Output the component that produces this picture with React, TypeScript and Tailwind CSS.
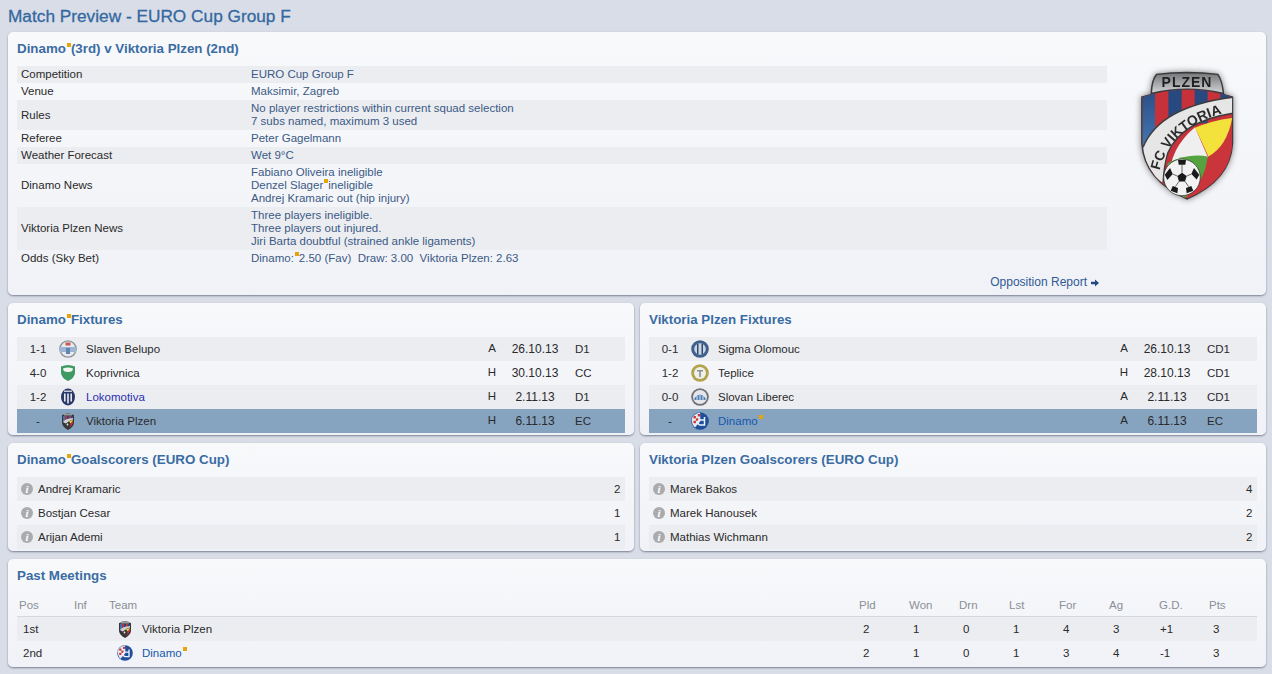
import type { ReactNode } from 'react'

const font = { fontFamily: '"Liberation Sans", Arial, sans-serif' }

const Flag = () => <span className="ml-[1px] inline-block h-[4px] w-[4px] bg-[#e5a50a] align-[6px]" />

const Panel = ({ title, children, className = '' }: { title: ReactNode; children: ReactNode; className?: string }) => (
  <section className={`rounded-[5px] bg-gradient-to-b from-[#f8f9fb] to-[#f1f2f7] px-[9px] shadow-[0_1px_2px_rgba(70,78,100,0.65)] ${className}`}>
    <h2 className="h-[34px] text-[13.33px] font-bold leading-[33px] text-[#3a6ca3]">{title}</h2>
    {children}
  </section>
)

const Ball = ({ cx, cy, r }: { cx: number; cy: number; r: number }) => (
  <g>
    <circle cx={cx} cy={cy} r={r} fill="#f2f2f2" stroke="#222" strokeWidth="2" />
    <polygon points={`${cx},${cy - 14} ${cx + 14},${cy - 4} ${cx + 9},${cy + 12} ${cx - 9},${cy + 12} ${cx - 14},${cy - 4}`} fill="#1a1a1a" />
    <polygon points={`${cx - 12},${cy - 52} ${cx + 12},${cy - 52} ${cx + 10},${cy - 38} ${cx - 10},${cy - 38}`} fill="#1a1a1a" />
    <polygon points={`${cx + 36},${cy - 28} ${cx + 52},${cy - 8} ${cx + 44},${cy + 6} ${cx + 28},${cy - 10}`} fill="#1a1a1a" />
    <polygon points={`${cx - 36},${cy - 28} ${cx - 52},${cy - 8} ${cx - 44},${cy + 8} ${cx - 28},${cy - 10}`} fill="#1a1a1a" />
    <polygon points={`${cx - 28},${cy + 26} ${cx - 12},${cy + 32} ${cx - 14},${cy + 48} ${cx - 34},${cy + 40}`} fill="#1a1a1a" />
    <polygon points={`${cx + 28},${cy + 26} ${cx + 12},${cy + 32} ${cx + 14},${cy + 48} ${cx + 34},${cy + 40}`} fill="#1a1a1a" />
    <path d={`M${cx} ${cy - 14}V${cy - 38}M${cx + 14} ${cy - 4}L${cx + 28} ${cy - 10}M${cx - 14} ${cy - 4}L${cx - 28} ${cy - 10}M${cx + 9} ${cy + 12}L${cx + 20} ${cy + 28}M${cx - 9} ${cy + 12}L${cx - 20} ${cy + 28}`} stroke="#222" strokeWidth="2" />
  </g>
)

// viewBox coords are the 3x zoom of the crest area
const PlzenCrest = ({ className }: { className: string }) => (
  <svg viewBox="108 60 300 400" className={className}>
    <defs>
      <clipPath id="shield-lg">
        <path d="M124 142 Q258 96 394 142 L394 280 Q388 392 258 446 Q132 392 124 280 Z" />
      </clipPath>
      <linearGradient id="band-lg" x1="0" y1="0" x2="0" y2="1">
        <stop offset="0" stopColor="#77797c" />
        <stop offset="1" stopColor="#d0d1d3" />
      </linearGradient>
      <linearGradient id="blue-lg" x1="0" y1="0" x2="0" y2="1">
        <stop offset="0" stopColor="#27497f" />
        <stop offset="1" stopColor="#4a80bd" />
      </linearGradient>
      <path id="arc-text" d="M176 362 Q208 224 392 184" />
    </defs>
    <path d="M148 132 Q150 88 165 71 Q258 60 352 71 Q366 90 370 132 L397 140 L397 282 Q390 394 258 450 Q128 394 120 282 L120 140 Z" fill="#3a3a3c" />
    <path d="M153 128 Q155 90 168 75 Q258 66 349 75 Q362 92 365 128 Q258 104 153 128 Z" fill="url(#band-lg)" />
    <text x="258" y="111" textAnchor="middle" fontSize="42" fontWeight="700" fill="#1f1f1f" letterSpacing="3" style={font}>
      PLZEN
    </text>
    <g clipPath="url(#shield-lg)">
      <rect x="120" y="100" width="280" height="350" fill="#c7313a" />
      <rect x="120" y="100" width="42" height="230" fill="url(#blue-lg)" />
      <rect x="202" y="100" width="40" height="140" fill="#27497f" />
      <rect x="281" y="100" width="39" height="120" fill="#27497f" />
      <rect x="358" y="100" width="40" height="80" fill="#27497f" />
      <path d="M394 190 L394 300 Q380 392 258 446 L300 330 Q300 240 394 190 Z" fill="#c9353b" />
      <path d="M205 400 Q200 300 282 232 L320 320 Q300 400 246 450 Z" fill="#efefef" />
      <path d="M282 234 Q330 212 394 204 Q378 290 322 320 Q300 270 282 234 Z" fill="#f3e13c" />
      <path d="M200 340 Q260 310 320 320 Q312 400 246 448 L190 400 Z" fill="#55a33f" />
      <path d="M126 292 Q176 170 396 142 L396 190 Q240 214 200 310 Q188 350 186 400 L160 382 Q130 340 126 292 Z" fill="#e6e6e6" />
      <path d="M126 292 Q176 170 396 142" fill="none" stroke="#3c3c3e" strokeWidth="4" />
      <path d="M396 190 Q240 214 200 310 Q188 350 186 400" fill="none" stroke="#3c3c3e" strokeWidth="4" />
    </g>
    <text fontSize="42" fontWeight="700" fill="#2a2a2a" style={font}>
      <textPath href="#arc-text" startOffset="0">
        FC VIKTORIA
      </textPath>
    </text>
    <Ball cx={243} cy={383} r={55} />
  </svg>
)

const Round = ({ children }: { children: ReactNode }) => (
  <svg viewBox="0 0 18 18" className="h-[18px] w-[18px]">
    {children}
  </svg>
)

const crests: Record<string, ReactNode> = {
  slaven: (
    <Round>
      <circle cx="9" cy="9" r="8.8" fill="#8d9197" />
      <circle cx="9" cy="9" r="7.4" fill="#e9eaee" />
      <rect x="1" y="7" width="16" height="5" fill="#9db4d2" />
      <rect x="6.500" y="2.500" width="5" height="3" fill="#c9574f" />
      <rect x="7" y="8" width="4" height="6" fill="#5f86b3" />
    </Round>
  ),
  koprivnica: (
    <Round>
      <path d="M2 2.500 Q9 -0.5 16 2.500 L16 9 Q15.500 14 9 17 Q2.500 14 2 9 Z" fill="#3d9a63" />
      <path d="M4 4.500 Q9 2.500 14 4.500 Q14 8 9 8 Q4 8 4 4.500 Z" fill="#f3f5f2" />
    </Round>
  ),
  lokomotiva: (
    <Round>
      <ellipse cx="9" cy="9" rx="7" ry="8.500" fill="#2a3769" />
      <rect x="5" y="5.500" width="1.600" height="8" fill="#e8e9f0" />
      <rect x="8.200" y="5.500" width="1.600" height="10" fill="#e8e9f0" />
      <rect x="11.400" y="5.500" width="1.600" height="8" fill="#e8e9f0" />
      <rect x="5" y="2.500" width="8" height="1.500" fill="#c7cad8" />
    </Round>
  ),
  sigma: (
    <Round>
      <circle cx="9" cy="9" r="8.800" fill="#3f5f8c" />
      <circle cx="9" cy="9" r="5.800" fill="#cfd6e2" />
      <rect x="6" y="4" width="1.500" height="10" fill="#2b4a78" />
      <rect x="10.500" y="4" width="1.500" height="10" fill="#2b4a78" />
    </Round>
  ),
  teplice: (
    <Round>
      <circle cx="9" cy="9" r="8.800" fill="#b3a24e" />
      <circle cx="9" cy="9" r="6" fill="#eef0ea" />
      <path d="M6 6h6v1.400H9.800V13H8.200V7.400H6z" fill="#8b8f92" />
    </Round>
  ),
  slovan: (
    <Round>
      <circle cx="9" cy="9" r="8.800" fill="#6e7277" />
      <circle cx="9" cy="9" r="7" fill="#e4e6ea" />
      <path d="M3.500 10 Q9 3 14.500 10 V12 H3.500 Z" fill="#4f7fb8" />
      <path d="M6 8v5M9 6.500v7M12 8v5" stroke="#e4e6ea" strokeWidth="1" />
    </Round>
  ),
  dinamo: (
    <Round>
      <circle cx="9" cy="9" r="8.800" fill="#1f4f9c" />
      <path d="M.8 7 Q2 2 9 .5 L9.500 9 L4 15.500 Q.5 12 .8 7 Z" fill="#e9e9ee" />
      <rect x="2.500" y="4" width="2.400" height="2.400" fill="#c9313a" />
      <rect x="6.800" y="2" width="2.400" height="2.400" fill="#c9313a" />
      <rect x="4.900" y="6.400" width="2.400" height="2.400" fill="#c9313a" />
      <rect x="2.500" y="8.800" width="2.400" height="2.400" fill="#c9313a" />
      <path d="M13.500 5v8h-4a2.400 2.400 0 0 1 0-5h4" fill="none" stroke="#f0f3fa" strokeWidth="1.500" />
    </Round>
  ),
  viktoria: (
    <svg viewBox="0 0 14 18" className="h-[18px] w-[14px]">
      <path d="M1 3 L3 2.500 Q7 0 11 2.500 L13 3 V11 Q12.500 15 7 18 Q1.500 15 1 11 Z" fill="#36363a" />
      <rect x="3" y="1.500" width="8" height="2" fill="#9a9b9e" />
      <path d="M2 4h2v6H2z" fill="#3e70ab" />
      <path d="M4 4h2v4H4z" fill="#b8343b" />
      <path d="M6 4h2v3H6z" fill="#27497f" />
      <path d="M8 4h2v3H8z" fill="#b8343b" />
      <path d="M10 4h2v3h-2z" fill="#27497f" />
      <path d="M2 10 Q4 6.500 12 6 V7.500 Q7 8.500 5.500 12 Z" fill="#cfd0d2" />
      <path d="M8 9 L12 8 Q11.500 10.500 9.500 11.500 Z" fill="#e8d53c" />
      <path d="M12 9 V11 Q11 14 8 16 L9 12 Z" fill="#c7313a" />
      <circle cx="7" cy="13" r="2.500" fill="#3a3a3a" />
      <circle cx="6.500" cy="12.500" r="0.900" fill="#e4e4e4" />
    </svg>
  ),
}

type Fixture = { score: string; crest: string; team: ReactNode; venue: string; date: string; comp: string; link?: boolean }

const Fixtures = ({ rows }: { rows: Fixture[] }) => (
  <div>
    {rows.map((row, i) => (
      <div
        key={row.date}
        className={`grid h-[24px] grid-cols-[42px_27px_396px_20px_66px_1fr] items-center ${
          i === 3 ? 'bg-[#86a3c0]' : i % 2 === 0 ? 'bg-[#ecedf1]' : ''
        }`}
      >
        <span className="text-center">{row.score}</span>
        <span className="flex justify-center pr-[9px]">{crests[row.crest]}</span>
        <span className={row.link ? (i === 3 ? 'text-[#1657ae]' : 'text-[#2b2fb0]') : ''}>{row.team}</span>
        <span className="mb-[2px] text-center">{row.venue}</span>
        <span className="text-center text-[12px]">{row.date}</span>
        <span className="pl-[7px]">{row.comp}</span>
      </div>
    ))}
  </div>
)

const Scorers = ({ rows }: { rows: [string, number][] }) => (
  <div>
    {rows.map(([name, goals], i) => (
      <div key={name} className={`flex h-[24px] items-center pl-[4px] pr-[4px] ${i % 2 === 0 ? 'bg-[#ecedf1]' : ''}`}>
        <span className="mr-[5px] flex h-[12px] w-[12px] items-center justify-center rounded-full bg-[#a9abae] text-[11px] font-bold italic leading-none text-white" style={{ fontFamily: '"Liberation Serif", serif' }}>
          i
        </span>
        <span className="flex-1">{name}</span>
        <span className="w-[7px]">{goals}</span>
      </div>
    ))}
  </div>
)

const infoRows: [string, ReactNode[]][] = [
  ['Competition', ['EURO Cup Group F']],
  ['Venue', ['Maksimir, Zagreb']],
  ['Rules', ['No player restrictions within current squad selection', '7 subs named, maximum 3 used']],
  ['Referee', ['Peter Gagelmann']],
  ['Weather Forecast', ['Wet 9°C']],
  ['Dinamo News', ['Fabiano Oliveira ineligible', <>Denzel Slager<Flag />ineligible</>, 'Andrej Kramaric out (hip injury)']],
  ['Viktoria Plzen News', ['Three players ineligible.', 'Three players out injured.', 'Jiri Barta doubtful (strained ankle ligaments)']],
  ['Odds (Sky Bet)', [<>Dinamo:<Flag />2.50 (Fav)&nbsp; Draw: 3.00&nbsp; Viktoria Plzen: 2.63</>]],
]

const headers = ['Pld', 'Won', 'Drn', 'Lst', 'For', 'Ag', 'G.D.', 'Pts']

const tableRows = [
  { pos: '1st', crest: 'viktoria', team: <>Viktoria Plzen</>, link: false, stats: ['2', '1', '0', '1', '4', '3', '+1', '3'] },
  { pos: '2nd', crest: 'dinamo', team: <>Dinamo<Flag /></>, link: true, stats: ['2', '1', '0', '1', '3', '4', '-1', '3'] },
]

export default function App() {
  return (
    <div style={font} className="h-[674px] overflow-hidden bg-[#d9dde8] pl-[8px] pr-[6px] text-[11.5px] leading-[13px] text-[#2a2a2a]">
      <h1 className="h-[32px] text-[17.25px] font-normal leading-[32px] text-[#34689f] [-webkit-text-stroke:0.3px_#34689f]">Match Preview - EURO Cup Group F</h1>

      <Panel title={<>Dinamo<Flag />(3rd) v Viktoria Plzen (2nd)</>} className="h-[263px]">
        <div className="flex">
          <div className="w-[1090px]">
            {infoRows.map(([label, lines], i) => (
              <div key={label} className={`grid grid-cols-[234px_1fr] items-center py-[2px] ${i % 2 === 0 ? 'bg-[#ecedf1]' : ''}`}>
                <span className="pl-[4px]">{label}</span>
                <div className="text-[#3b5a85]">
                  {lines.map((line, j) => (
                    <p key={j}>{line}</p>
                  ))}
                </div>
              </div>
            ))}
            <p className="mt-[9px] flex items-center justify-end pr-[8px] text-[12px] text-[#2f5a94]">
              Opposition Report
              <svg viewBox="0 0 9 8" className="ml-[4px] h-[8px] w-[8px]">
                <path d="M0 2.500h4.500V0L9 4 4.500 8V5.500H0z" fill="#24487c" />
              </svg>
            </p>
          </div>
          <div className="flex flex-1 justify-center pl-[9px] pt-[4px]">
            <PlzenCrest className="h-[133px] w-[100px] drop-shadow-[0_0_3px_rgba(0,0,0,0.5)]" />
          </div>
        </div>
      </Panel>

      <div className="mt-[8px] grid grid-cols-[626px_626px] gap-x-[6px]">
        <Panel title={<>Dinamo<Flag />Fixtures</>} className="h-[132px]">
          <Fixtures
            rows={[
              { score: '1-1', crest: 'slaven', team: 'Slaven Belupo', venue: 'A', date: '26.10.13', comp: 'D1' },
              { score: '4-0', crest: 'koprivnica', team: 'Koprivnica', venue: 'H', date: '30.10.13', comp: 'CC' },
              { score: '1-2', crest: 'lokomotiva', team: 'Lokomotiva', venue: 'H', date: '2.11.13', comp: 'D1', link: true },
              { score: '-', crest: 'viktoria', team: 'Viktoria Plzen', venue: 'H', date: '6.11.13', comp: 'EC' },
            ]}
          />
        </Panel>
        <Panel title="Viktoria Plzen Fixtures" className="h-[132px]">
          <Fixtures
            rows={[
              { score: '0-1', crest: 'sigma', team: 'Sigma Olomouc', venue: 'A', date: '26.10.13', comp: 'CD1' },
              { score: '1-2', crest: 'teplice', team: 'Teplice', venue: 'H', date: '28.10.13', comp: 'CD1' },
              { score: '0-0', crest: 'slovan', team: 'Slovan Liberec', venue: 'A', date: '2.11.13', comp: 'CD1' },
              { score: '-', crest: 'dinamo', team: <>Dinamo<Flag /></>, venue: 'A', date: '6.11.13', comp: 'EC', link: true },
            ]}
          />
        </Panel>
      </div>

      <div className="mt-[8px] grid grid-cols-[626px_626px] gap-x-[6px]">
        <Panel title={<>Dinamo<Flag />Goalscorers (EURO Cup)</>} className="h-[108px]">
          <Scorers rows={[['Andrej Kramaric', 2], ['Bostjan Cesar', 1], ['Arijan Ademi', 1]]} />
        </Panel>
        <Panel title="Viktoria Plzen Goalscorers (EURO Cup)" className="h-[108px]">
          <Scorers rows={[['Marek Bakos', 4], ['Marek Hanousek', 2], ['Mathias Wichmann', 2]]} />
        </Panel>
      </div>

      <Panel title="Past Meetings" className="mt-[8px] h-[108px]">
        <div className="grid h-[24px] grid-cols-[55px_35px_732px_repeat(8,50px)] items-end border-b border-[#d5d7de] pb-[4px] pl-[2px] text-[#8b8f96]">
          <span>Pos</span>
          <span>Inf</span>
          <span>Team</span>
          {headers.map((h) => (
            <span key={h} className="pl-[18px]">{h}</span>
          ))}
        </div>
        {tableRows.map((row, i) => (
          <div key={row.pos} className={`grid h-[24px] grid-cols-[100px_16px_708px_repeat(8,50px)] items-center ${i === 0 ? 'bg-[#ecedf1]' : ''}`}>
            <span className="pl-[6px]">{row.pos}</span>
            <span className="flex justify-center">{crests[row.crest]}</span>
            <span className={`pl-[9px] ${row.link ? 'text-[#1657ae]' : ''}`}>{row.team}</span>
            {row.stats.map((s, j) => (
              <span key={j} className={s.length > 1 ? 'pl-[19px]' : 'pl-[22px]'}>{s}</span>
            ))}
          </div>
        ))}
      </Panel>
    </div>
  )
}
